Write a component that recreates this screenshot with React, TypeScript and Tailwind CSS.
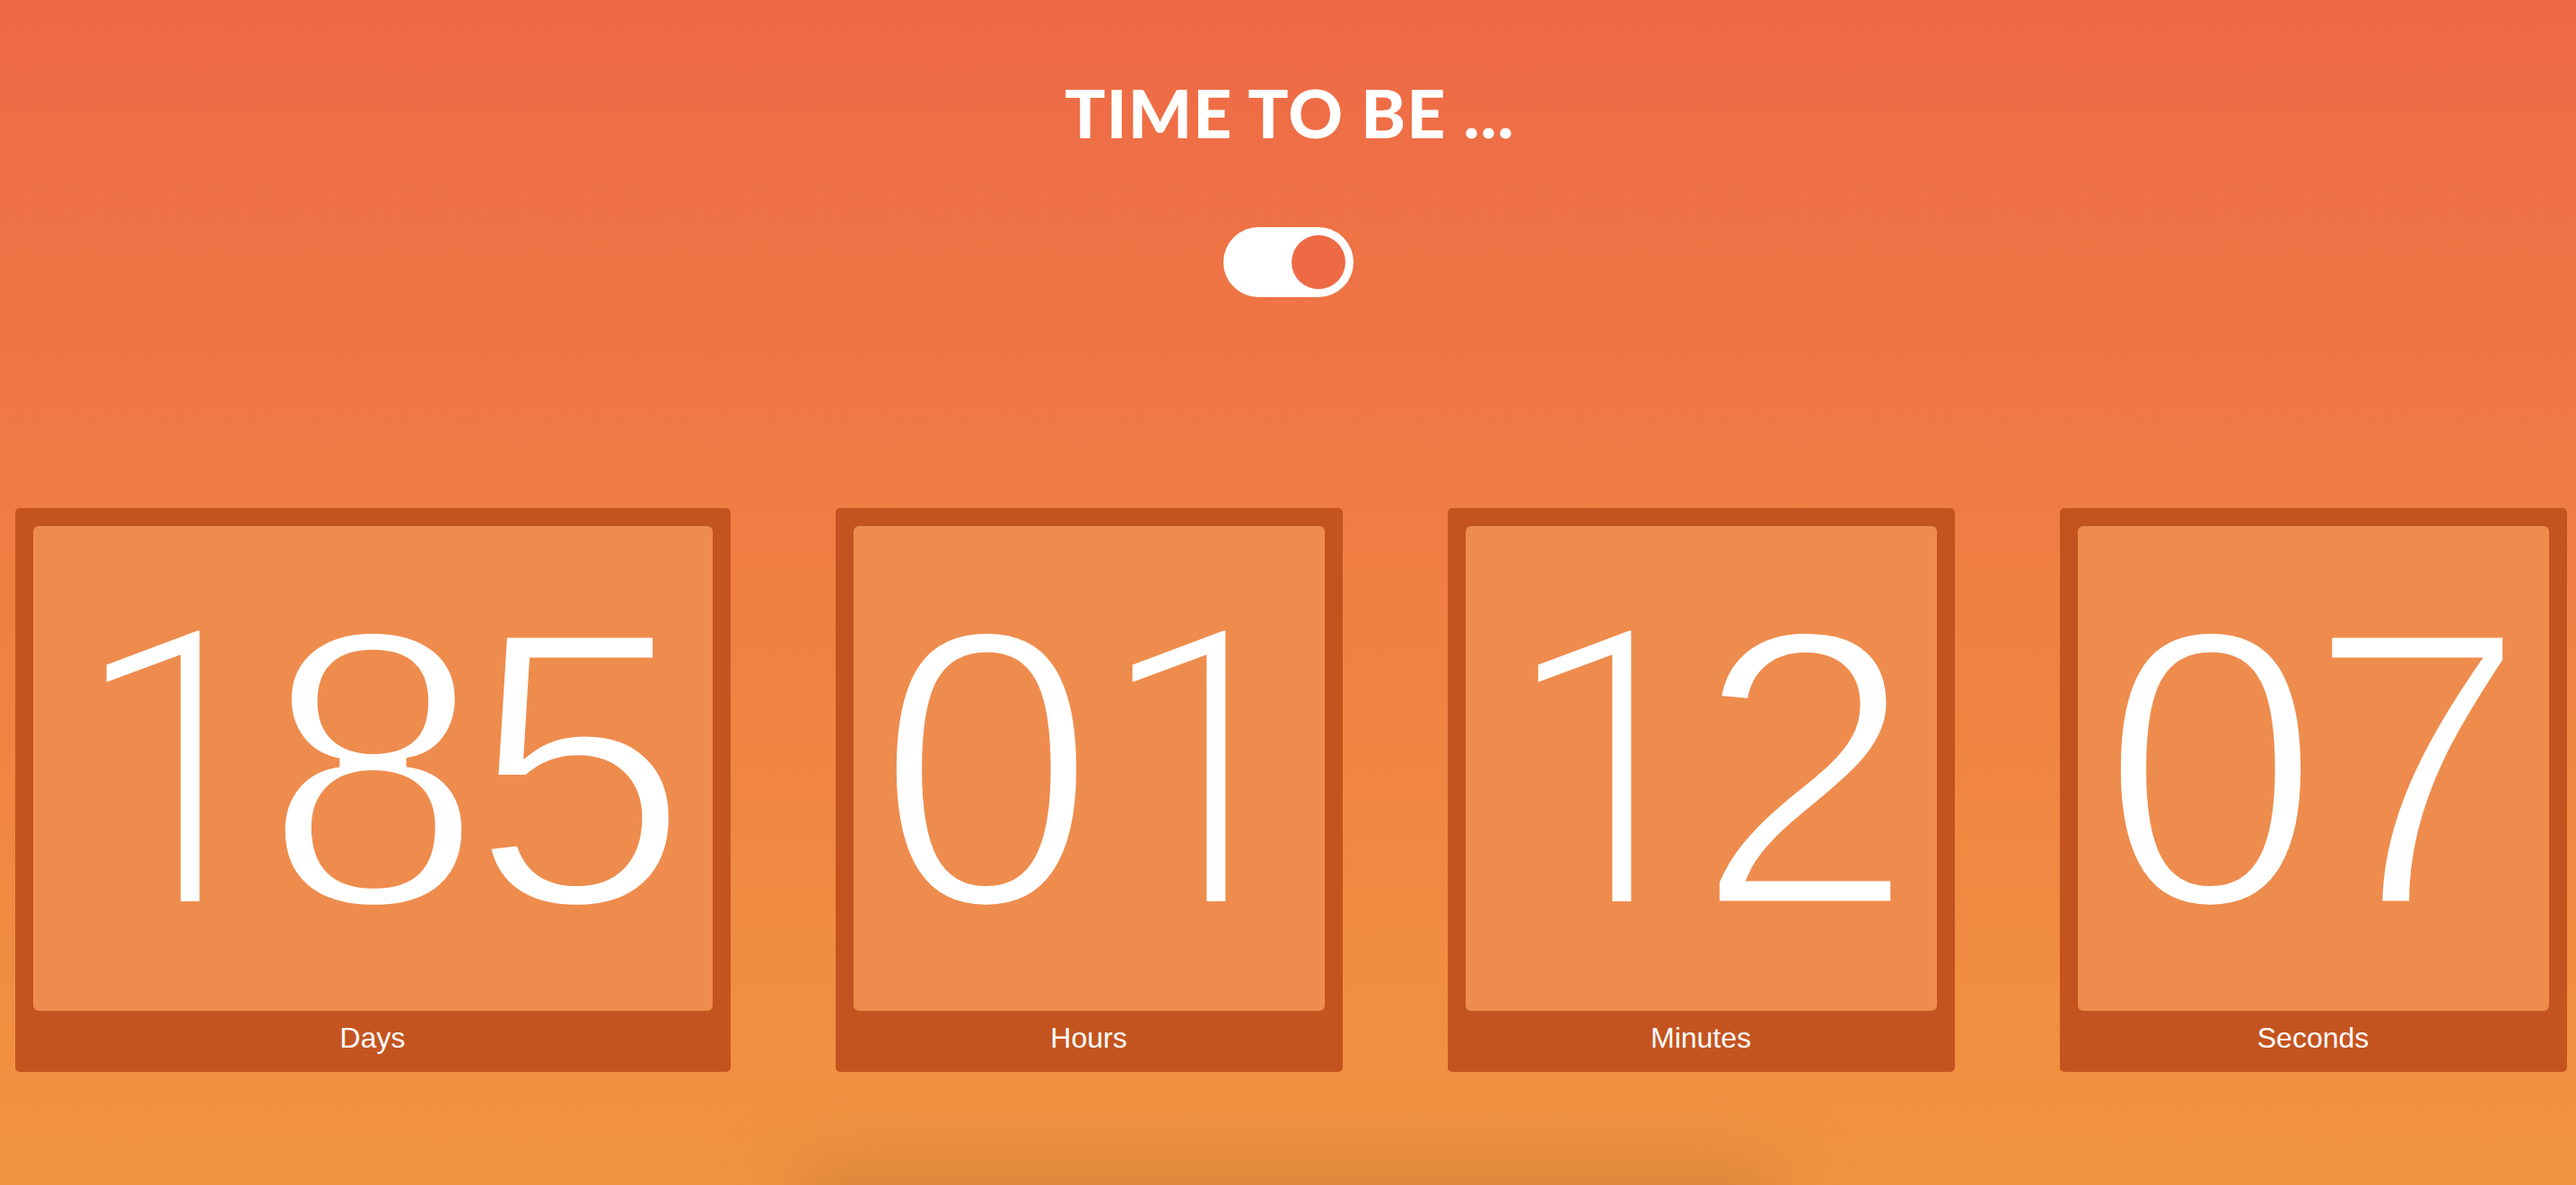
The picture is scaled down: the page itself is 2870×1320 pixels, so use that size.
import React from 'react';

interface UnitProps {
  value: string;
  label: string;
  wide?: boolean;
}

// Each digit sits in a fixed cell so the numbers line up like tabular figures.
const Digit: React.FC<{ char: string }> = ({ char }) =>
  char === '1' ? (
    <span
      className="inline-block w-[230px] translate-x-[8px] -translate-y-[3px] text-center text-[428px] leading-none font-light tracking-[-10px] text-white [-webkit-text-stroke:4px_#EE8C4D]"
      style={{ fontFamily: 'Roboto, "Liberation Sans", sans-serif' }}
    >
      {char}
    </span>
  ) : (
    <span
      className="inline-block w-[230px] -translate-x-[7px] text-center text-[442px] leading-none tracking-[-16px] text-white [-webkit-text-stroke:11px_#EE8C4D]"
      style={{ fontFamily: '"Liberation Sans", Arial, sans-serif' }}
    >
      {char}
    </span>
  );

const Unit: React.FC<UnitProps> = ({ value, label, wide = false }) => (
  <div
    className={`flex flex-col rounded-[5px] bg-[#C4541F] px-[20px] pt-[20px] ${
      wide ? 'w-[797px]' : 'w-[565px]'
    }`}
  >
    <div className="flex h-[540px] items-center justify-center rounded-[6px] bg-[#EE8C4D]">
      <div className="flex items-baseline whitespace-nowrap">
        {value.split('').map((c, i) => (
          <Digit key={i} char={c} />
        ))}
      </div>
    </div>
    <div
      className="flex h-[68px] items-center justify-center pb-[9px] text-[32px] text-white"
      style={{ fontFamily: '"Liberation Sans", Arial, sans-serif' }}
    >
      {label}
    </div>
  </div>
);

export default function App() {
  const units: UnitProps[] = [
    { value: '185', label: 'Days', wide: true },
    { value: '01', label: 'Hours' },
    { value: '12', label: 'Minutes' },
    { value: '07', label: 'Seconds' },
  ];

  return (
    <div className="relative flex h-[1320px] w-full flex-col items-center overflow-hidden bg-gradient-to-b from-[#EE6946] to-[#F0943F]">
      <h1
        className="mt-[88px] pl-[4px] text-[75px] leading-none font-black tracking-[1.2px] text-white"
        style={{ fontFamily: 'Lato, "Liberation Sans", sans-serif' }}
      >
        TIME TO BE ...
      </h1>

      {/* toggle */}
      <div className="mt-[90px] flex h-[78px] w-[145px] shrink-0 items-center justify-end rounded-full bg-white pr-[9px]">
        <div className="h-[60px] w-[60px] shrink-0 rounded-full bg-[#EE6A45]" />
      </div>

      <div className="mt-[235px] flex w-full justify-center gap-[117px] pl-[6px]">
        {units.map(u => (
          <Unit key={u.label} {...u} />
        ))}
      </div>

      <div className="mt-[110px] h-[80px] w-[1100px] shrink-0 rounded-full bg-[#D5803A] blur-2xl" />
    </div>
  );
}
